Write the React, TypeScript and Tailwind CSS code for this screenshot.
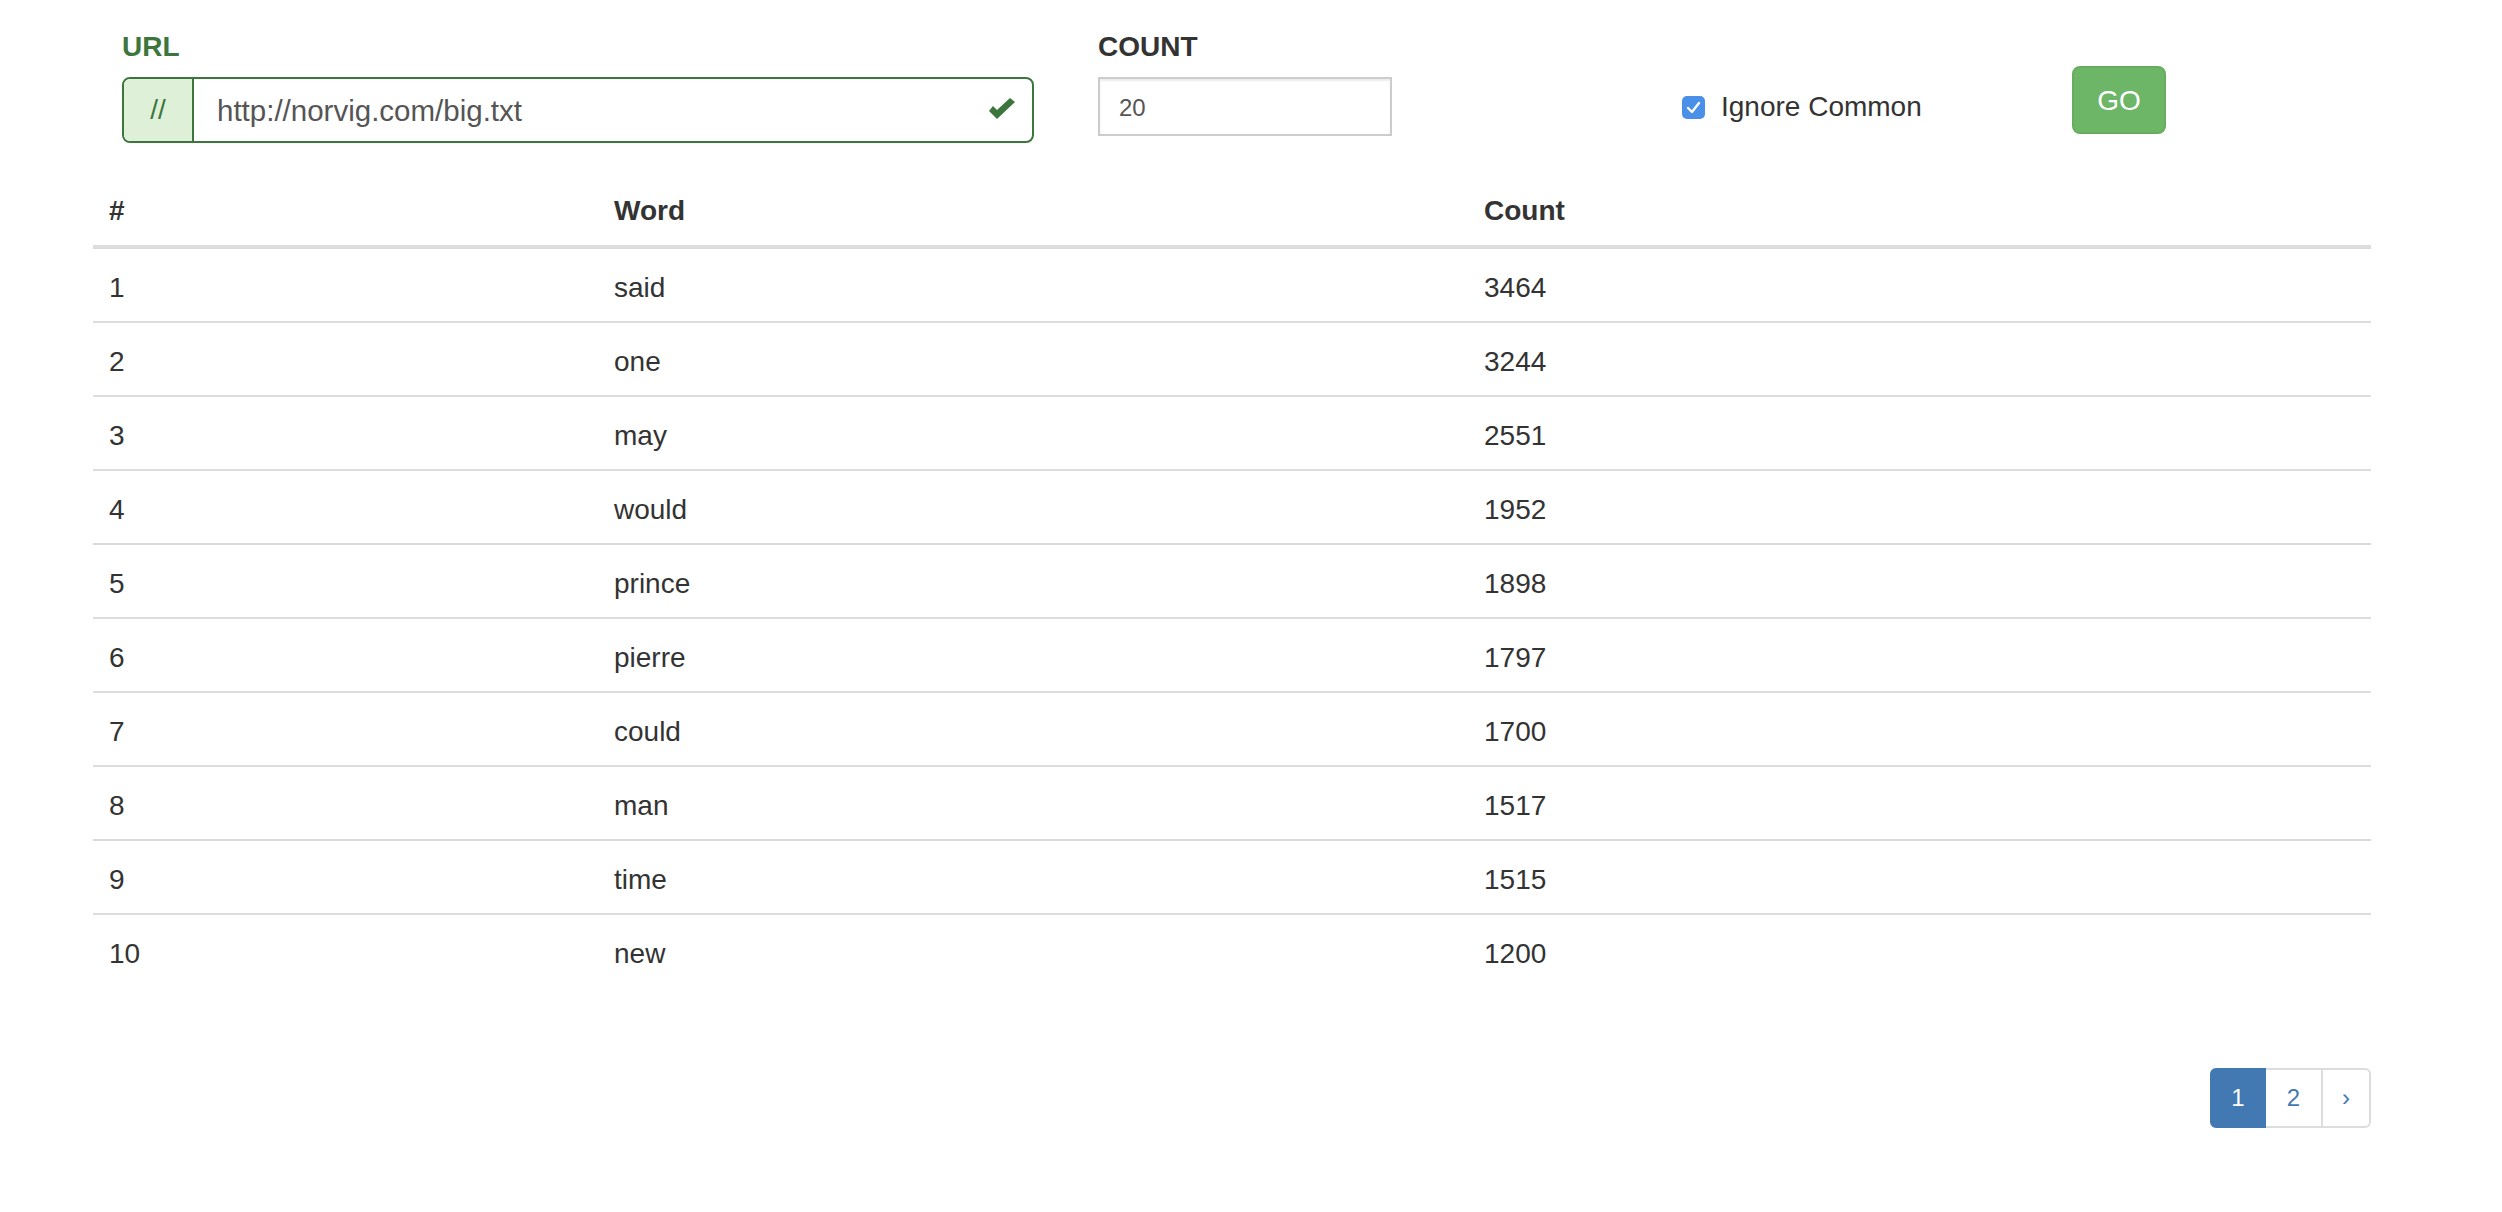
import React from 'react';

const rows: [number, string, number][] = [
  [1, 'said', 3464],
  [2, 'one', 3244],
  [3, 'may', 2551],
  [4, 'would', 1952],
  [5, 'prince', 1898],
  [6, 'pierre', 1797],
  [7, 'could', 1700],
  [8, 'man', 1517],
  [9, 'time', 1515],
  [10, 'new', 1200],
];

const App: React.FC = () => {
  return (
    <div className="min-h-[1212px] w-full bg-white text-[#333] font-['Liberation_Sans',Arial,sans-serif]">
      <div className="ml-[93px] w-[2278px] pt-[27px]">
        {/* Form row */}
        <div className="flex items-start">
          <div className="ml-[29px] w-[912px]">
            <label className="block text-[28px] leading-[40px] font-bold text-[#3c763d] mb-[10px]">URL</label>
            <div className="flex h-[66px] rounded-[8px] border-2 border-[#3c763d] overflow-hidden">
              <span className="flex w-[70px] items-center justify-center bg-[#dff0d8] border-r-2 border-[#3c763d] text-[28px] text-[#3c763d]">//</span>
              <div className="flex flex-1 items-center pl-[23px] pr-[16px]">
                <span className="flex-1 pt-[2px] text-[29.5px] text-[#555]">http://norvig.com/big.txt</span>
                <svg width="28" height="24" viewBox="0 0 28 24" className="text-[#3c763d]">
                  <path d="M1 13 L9 21 L27 4 L22 0 L9 12 L5 8 Z" fill="currentColor" />
                </svg>
              </div>
            </div>
          </div>

          <div className="ml-[64px] w-[294px]">
            <label className="block text-[28px] leading-[40px] font-bold mb-[10px]">COUNT</label>
            <div className="flex h-[59px] items-center border-2 border-[#ccc] pl-[19px] pt-[2px] shadow-[inset_0_2px_2px_rgba(0,0,0,0.075)] text-[24px] text-[#555]">
              20
            </div>
          </div>

          <label className="ml-[290px] mt-[60px] flex w-[390px] items-center gap-[16px] text-[28px] leading-[40px]">
            <span className="flex h-[23px] w-[23px] items-center justify-center rounded-[5px] bg-[#4a8fe8]">
              <svg width="15" height="13" viewBox="0 0 15 13">
                <path d="M2 7 L6 11 L13 2" fill="none" stroke="white" strokeWidth="2.4" strokeLinecap="round" strokeLinejoin="round" />
              </svg>
            </span>
            Ignore Common
          </label>

          <button className="mt-[39px] flex h-[68px] w-[94px] items-center justify-center rounded-[8px] border-2 border-[#66ad60] bg-[#6db567] pt-[2px] text-[28px] text-white">
            GO
          </button>
        </div>

        {/* Table */}
        <table className="mt-[30px] w-full text-left text-[28px] leading-[40px]">
          <thead>
            <tr>
              <th className="w-[505px] px-[16px] pt-[18px] pb-[14px] border-b-4 border-[#ddd] font-bold">#</th>
              <th className="w-[870px] px-[16px] pt-[18px] pb-[14px] border-b-4 border-[#ddd] font-bold">Word</th>
              <th className="px-[16px] pt-[18px] pb-[14px] border-b-4 border-[#ddd] font-bold">Count</th>
            </tr>
          </thead>
          <tbody>
            {rows.map(([n, word, count]) => (
              <tr key={n}>
                <td className="px-[16px] pt-[19px] pb-[13px] border-t-2 border-[#ddd]">{n}</td>
                <td className="px-[16px] pt-[19px] pb-[13px] border-t-2 border-[#ddd]">{word}</td>
                <td className="px-[16px] pt-[19px] pb-[13px] border-t-2 border-[#ddd]">{count}</td>
              </tr>
            ))}
          </tbody>
        </table>

        {/* Pagination */}
        <div className="mt-[81px] flex justify-end">
          <div className="flex h-[60px] text-[24px]">
            <span className="flex w-[56px] items-center justify-center rounded-l-[6px] border-2 border-[#4279b2] bg-[#4279b2] text-white">1</span>
            <span className="flex w-[55px] items-center justify-center border-y-2 border-[#ddd] text-[#4279b2]">2</span>
            <span className="flex w-[50px] items-center justify-center rounded-r-[6px] border-2 border-[#ddd] text-[#4279b2]">›</span>
          </div>
        </div>
      </div>
    </div>
  );
};

export default App;
